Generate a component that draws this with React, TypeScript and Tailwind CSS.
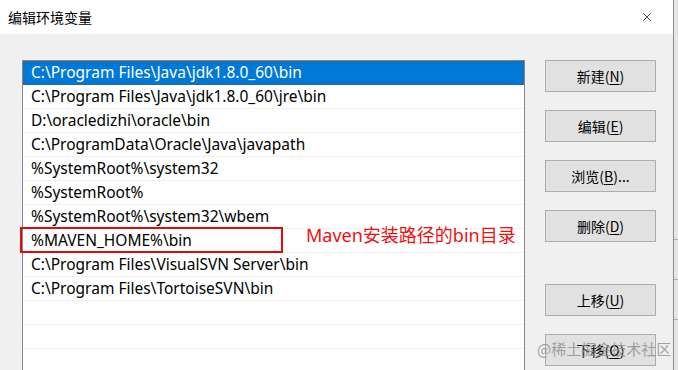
import { X } from 'lucide-react';

const paths = [
  'C:\\Program Files\\Java\\jdk1.8.0_60\\bin',
  'C:\\Program Files\\Java\\jdk1.8.0_60\\jre\\bin',
  'D:\\oracledizhi\\oracle\\bin',
  'C:\\ProgramData\\Oracle\\Java\\javapath',
  '%SystemRoot%\\system32',
  '%SystemRoot%',
  '%SystemRoot%\\system32\\wbem',
  '%MAVEN_HOME%\\bin',
  'C:\\Program Files\\VisualSVN Server\\bin',
  'C:\\Program Files\\TortoiseSVN\\bin',
  '',
  '',
  '',
];

function DlgButton({ label, hotkey, tail = '' }: { label: string; hotkey: string; tail?: string }) {
  return (
    <button className="h-[32px] w-[111px] border border-[#adadad] bg-[#e1e1e1] text-[14px] text-black flex items-center justify-center">
      {label}(<span className="underline underline-offset-2">{hotkey}</span>){tail}
    </button>
  );
}

export default function App() {
  return (
    <div
      className="relative w-[678px] h-[370px] overflow-hidden flex bg-[#f0f0f0]"
      style={{ fontFamily: '"Noto Sans", "Noto Sans CJK SC", sans-serif' }}
    >
      <div className="w-[673px] flex flex-col">
        <div className="h-[34px] bg-white flex items-center justify-between pl-[8px] pr-[19px] shrink-0">
          <span className="text-[14px] text-black" style={{ fontFamily: '"Noto Sans CJK SC", sans-serif' }}>
            编辑环境变量
          </span>
          <X className="w-[14px] h-[14px] text-black" strokeWidth={1.2} />
        </div>

        <div className="flex-1 flex pl-[22px] pt-[26px]">
          <div className="relative w-[503px] h-[320px] border border-[#828790] bg-white">
            {paths.map((p, i) => (
              <div
                key={i}
                className={
                  i === 0
                    ? 'h-[24px] flex items-center pl-[7px] bg-[#0078d7] text-white text-[15.5px] border border-dotted border-[#5a5a5a]'
                    : 'relative h-[24px] flex items-center pl-[8px] text-black text-[15.5px] border-b border-[#f0f0f0]'
                }
              >
                {p}
                {p === '%MAVEN_HOME%\\bin' && (
                  <>
                    <div className="absolute left-[-3px] top-[-2px] w-[263px] h-[26px] border-2 border-[#e20a0a]" />
                    <span className="absolute left-[283px] top-[-7px] text-[18px] text-[#f01010] whitespace-nowrap">
                      Maven安装路径的bin目录
                    </span>
                  </>
                )}
              </div>
            ))}
          </div>

          <div className="ml-[20px] flex flex-col" style={{ fontFamily: '"Noto Sans CJK SC", sans-serif' }}>
            <div className="flex flex-col gap-[18px]">
              <DlgButton label="新建" hotkey="N" />
              <DlgButton label="编辑" hotkey="E" />
              <DlgButton label="浏览" hotkey="B" tail="..." />
              <DlgButton label="删除" hotkey="D" />
            </div>
            <div className="mt-[42px] flex flex-col gap-[18px]">
              <DlgButton label="上移" hotkey="U" />
              <DlgButton label="下移" hotkey="O" />
            </div>
          </div>
        </div>
      </div>

      <div className="w-[5px] border-l border-[#8a8a8a] bg-[#e6e6e6] flex flex-col">
        <div className="h-[240px] border-b border-[#b0b0b0]" />
        <div className="h-[40px] border-b border-[#b0b0b0]" />
        <div className="h-[40px] border-b border-[#b0b0b0]" />
      </div>

      <span
        className="absolute left-[537px] top-[338px] text-[15px] text-[#8f8f8f] opacity-80 whitespace-nowrap"
        style={{ fontFamily: '"Noto Sans CJK SC", sans-serif' }}
      >
        @稀土掘金技术社区
      </span>
    </div>
  );
}
